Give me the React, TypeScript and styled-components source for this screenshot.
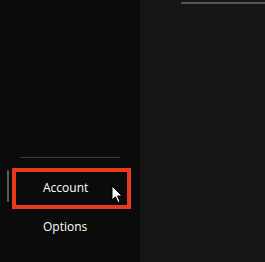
import styled, { createGlobalStyle } from "styled-components";

const GlobalStyle = createGlobalStyle`
  html, body {
    margin: 0;
    padding: 0;
    background: #161616;
    font-family: "Open Sans", "Noto Sans", sans-serif;
  }
`;

const Page = styled.div`
  display: flex;
  width: 265px;
  height: 262px;
  overflow: hidden;
`;

const Sidebar = styled.aside`
  width: 140px;
  background: #0b0b0b;
  display: flex;
  flex-direction: column;
  padding-top: 157px;
  box-sizing: border-box;
`;

const Separator = styled.div`
  height: 1px;
  margin: 0 20px 10px 20px;
  background: #3c3c3c;
`;

const NavItem = styled.div<{ $highlight?: boolean }>`
  position: relative;
  height: ${(p) => (p.$highlight ? 41 : 36)}px;
  margin: 0 9px 0 12px;
  box-sizing: border-box;
  display: flex;
  align-items: center;
  padding-left: ${(p) => (p.$highlight ? 27 : 31)}px;
  padding-bottom: 2px;
  border: ${(p) => (p.$highlight ? "4px solid #e8391e" : "none")};
  color: #ffffff;
  font-size: 12px;
`;

const Indicator = styled.span`
  position: absolute;
  left: -9px;
  top: -2px;
  width: 2px;
  height: 32px;
  border-radius: 1px;
  background: #5a5a5a;
`;

const Cursor = styled.svg`
  position: absolute;
  left: 95px;
  top: 13px;
`;

const Main = styled.main`
  flex: 1;
  background: #161616;
  display: flex;
  flex-direction: column;
`;

const TopRule = styled.div`
  height: 2px;
  margin: 2px 0 0 41px;
  background: #555555;
`;

export default function App() {
  return (
    <>
      <GlobalStyle />
      <Page>
        <Sidebar>
          <Separator />
          <NavItem $highlight>
            <Indicator />
            Account
            <Cursor width="12" height="19" viewBox="0 0 12 19">
              <path
                d="M1 1 L1 15 L4.5 11.8 L7 17.5 L9 16.6 L6.6 11 L11 11 Z"
                fill="#ffffff"
                stroke="#000000"
                strokeWidth="1"
                strokeLinejoin="round"
              />
            </Cursor>
          </NavItem>
          <NavItem>Options</NavItem>
        </Sidebar>
        <Main>
          <TopRule />
        </Main>
      </Page>
    </>
  );
}
